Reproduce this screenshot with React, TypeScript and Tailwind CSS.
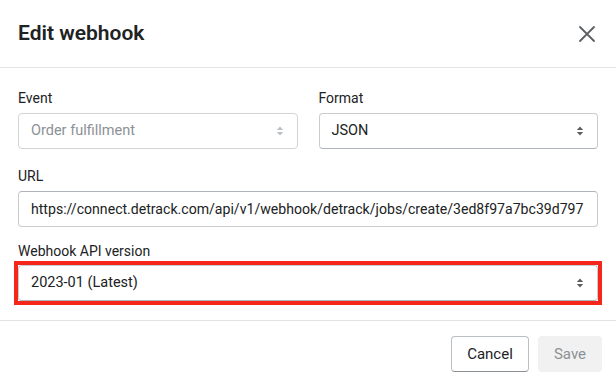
import { useState } from "react";

function SelectArrows({ disabled }: { disabled?: boolean }) {
  return (
    <svg width="10" height="14" viewBox="0 0 10 14" className={disabled ? "text-[#babfc3]" : "text-[#5c5f62]"}>
      <path d="M5 2.5 L8.2 6 H1.8 Z" fill="currentColor" />
      <path d="M5 11.5 L8.2 8 H1.8 Z" fill="currentColor" />
    </svg>
  );
}

function FakeSelect({ value, disabled }: { value: string; disabled?: boolean }) {
  return (
    <div
      className={
        "flex h-[36px] items-center justify-between rounded-[4px] border pl-[12px] pr-[12px] text-[14.5px] " +
        (disabled
          ? "border-[#d2d5d8] bg-white text-[#8c9196]"
          : "border-[#c9cccf] border-b-[#aeb4b9] bg-white text-[#202223]")
      }
    >
      <span>{value}</span>
      <SelectArrows disabled={disabled} />
    </div>
  );
}

export default function App() {
  const [url] = useState(
    "https://connect.detrack.com/api/v1/webhook/detrack/jobs/create/3ed8f97a7bc39d797"
  );

  return (
    <div className="h-[388px] w-[616px] overflow-hidden bg-white font-['Roboto',sans-serif] text-[#202223]">
      {/* HEADER */}
      <div className="flex h-[68px] items-center justify-between border-b border-[#e1e3e5] pl-[18px] pr-[20px]">
        <h2 className="text-[21px] font-semibold leading-none">Edit webhook</h2>
        <svg width="18" height="18" viewBox="0 0 18 18" className="text-[#5c5f62]">
          <path d="M2 2 L16 16 M16 2 L2 16" stroke="currentColor" strokeWidth="1.8" strokeLinecap="round" />
        </svg>
      </div>

      {/* BODY */}
      <div className="flex h-[253px] flex-col border-b border-[#e1e3e5] px-[18px] pt-[20px]">
        <div className="grid grid-cols-2 gap-[21px]">
          <div>
            <div className="mb-[5px] text-[14px] leading-[20px]">Event</div>
            <FakeSelect value="Order fulfillment" disabled />
          </div>
          <div>
            <div className="mb-[5px] text-[14px] leading-[20px]">Format</div>
            <FakeSelect value="JSON" />
          </div>
        </div>

        <div className="mt-[17px]">
          <div className="mb-[5px] text-[14px] leading-[20px]">URL</div>
          <input
            readOnly
            value={url}
            className="h-[36px] w-full rounded-[4px] border border-[#c9cccf] border-t-[#aeb4b9] bg-white pl-[12px] pr-[4px] text-[14.1px] text-[#202223] outline-none"
          />
        </div>

        <div className="mt-[14px]">
          <div className="text-[14px] leading-[20px]">Webhook API version</div>
          <div className="-mx-[4px] border-[4px] border-[#f5271a]">
            <FakeSelect value="2023-01 (Latest)" />
          </div>
        </div>
      </div>

      {/* FOOTER */}
      <div className="flex items-center justify-end gap-[9px] pr-[14px] pt-[15px]">
        <button className="h-[36px] w-[78px] rounded-[4px] border border-[#babfc3] border-b-[#8c9196] bg-white text-[15px] text-[#202223]">
          Cancel
        </button>
        <button className="h-[36px] w-[64px] rounded-[4px] bg-[#f1f1f1] text-[15px] text-[#8c9196]">
          Save
        </button>
      </div>
    </div>
  );
}
